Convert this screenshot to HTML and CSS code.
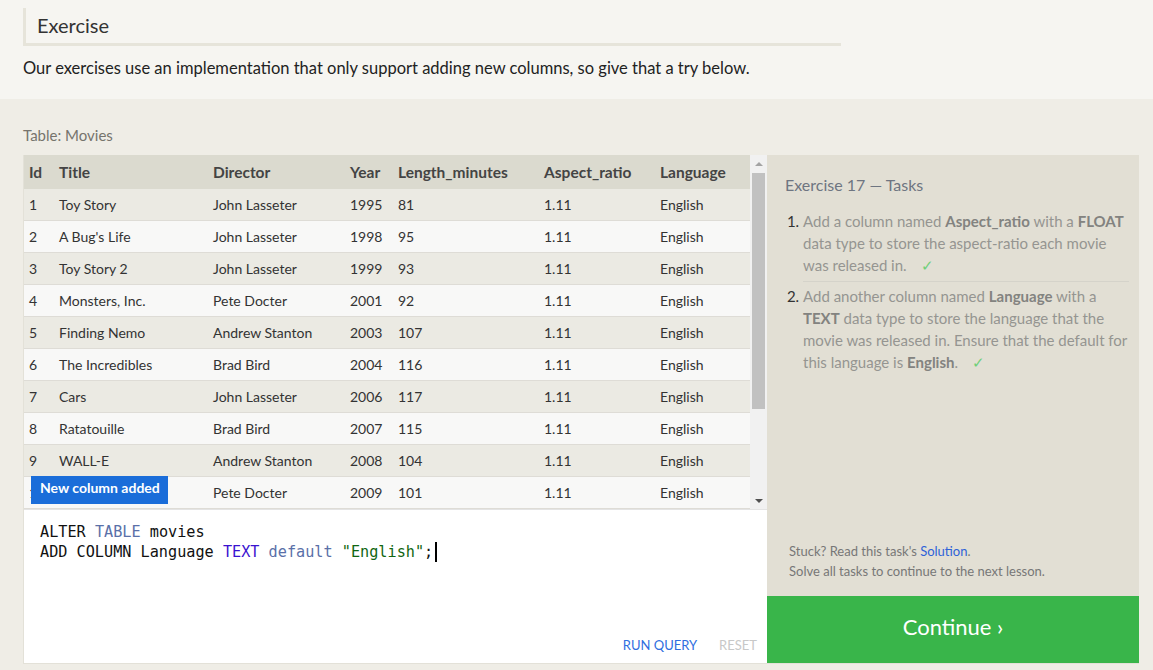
FILE: index.html
```html
<!DOCTYPE html>
<html>
<head>
<meta charset="utf-8">
<link rel="stylesheet" href="styles.css">
</head>
<body>
<div class="top">
  <div class="heading">Exercise</div>
  <p class="desc">Our exercises use an implementation that only support adding new columns, so give that a try below.</p>
</div>
<div class="main">
  <div class="caption">Table: Movies</div>
  <div class="widget">
    <div class="left">
      <div class="table-wrap">
        <table class="movies">
          <colgroup>
            <col style="width:27px"><col style="width:154px"><col style="width:137px"><col style="width:48px"><col style="width:146px"><col style="width:116px"><col style="width:98px">
          </colgroup>
          <thead>
            <tr><th>Id</th><th>Title</th><th>Director</th><th>Year</th><th>Length_minutes</th><th>Aspect_ratio</th><th>Language</th></tr>
          </thead>
          <tbody>
            <tr><td>1</td><td>Toy Story</td><td>John Lasseter</td><td>1995</td><td>81</td><td>1.11</td><td>English</td></tr>
            <tr><td>2</td><td>A Bug's Life</td><td>John Lasseter</td><td>1998</td><td>95</td><td>1.11</td><td>English</td></tr>
            <tr><td>3</td><td>Toy Story 2</td><td>John Lasseter</td><td>1999</td><td>93</td><td>1.11</td><td>English</td></tr>
            <tr><td>4</td><td>Monsters, Inc.</td><td>Pete Docter</td><td>2001</td><td>92</td><td>1.11</td><td>English</td></tr>
            <tr><td>5</td><td>Finding Nemo</td><td>Andrew Stanton</td><td>2003</td><td>107</td><td>1.11</td><td>English</td></tr>
            <tr><td>6</td><td>The Incredibles</td><td>Brad Bird</td><td>2004</td><td>116</td><td>1.11</td><td>English</td></tr>
            <tr><td>7</td><td>Cars</td><td>John Lasseter</td><td>2006</td><td>117</td><td>1.11</td><td>English</td></tr>
            <tr><td>8</td><td>Ratatouille</td><td>Brad Bird</td><td>2007</td><td>115</td><td>1.11</td><td>English</td></tr>
            <tr><td>9</td><td>WALL-E</td><td>Andrew Stanton</td><td>2008</td><td>104</td><td>1.11</td><td>English</td></tr>
            <tr><td>10</td><td>Up</td><td>Pete Docter</td><td>2009</td><td>101</td><td>1.11</td><td>English</td></tr>
          </tbody>
        </table>
        <div class="scrollbar">
          <div class="sb-btn"><span class="arrow-up"></span></div>
          <div class="sb-thumb"></div>
          <div class="sb-space"></div>
          <div class="sb-btn sb-btn-down"><span class="arrow-down"></span></div>
        </div>
        <div class="tooltip">New column added</div>
      </div>
      <div class="editor">
        <div class="code">
          <div class="line">ALTER <span class="kw">TABLE</span> movies</div>
          <div class="line">ADD COLUMN Language <span class="type">TEXT</span> <span class="kw">default</span> <span class="str">"English"</span>;<span class="cursor"></span></div>
        </div>
        <div class="actions">
          <span class="run">RUN QUERY</span>
          <span class="reset">RESET</span>
        </div>
      </div>
    </div>
    <div class="right">
      <div class="tasks">
        <div class="tasks-title">Exercise 17 — Tasks</div>
        <ol class="task-list">
          <li>Add a column named <b>Aspect_ratio</b> with a <b>FLOAT</b> data type to store the aspect-ratio each movie was released in.<span class="check">✓</span></li>
          <li>Add another column named <b>Language</b> with a <b>TEXT</b> data type to store the language that the movie was released in. Ensure that the default for this language is <b>English</b>.<span class="check">✓</span></li>
        </ol>
        <div class="stuck">
          <div>Stuck? Read this task's <span class="link">Solution</span>.</div>
          <div>Solve all tasks to continue to the next lesson.</div>
        </div>
      </div>
      <div class="continue">Continue ›</div>
    </div>
  </div>
</div>
</body>
</html>
```

FILE: styles.css
```css
html, body {
  margin: 0;
  padding: 0;
}
body {
  background: #efede6;
  font-family: "Lato", "Open Sans", sans-serif;
  color: #333;
}
.top {
  background: #f6f5f1;
  height: 99px;
  padding: 8px 0 0 23px;
  box-sizing: border-box;
}
.heading {
  border-left: 3px solid #e6e4da;
  border-bottom: 3px solid #e6e4da;
  font-size: 20px;
  line-height: 35px;
  padding-left: 11px;
  box-sizing: border-box;
  width: 818px;
  color: #333;
}
.desc {
  margin: 12px 0 0 0;
  font-size: 16.5px;
  color: #222;
  line-height: 20px;
}
.main {
  padding: 0 14px 0 23px;
}
.caption {
  font-size: 15px;
  color: #76746d;
  padding-top: 28px;
  height: 28px;
  line-height: 16px;
}
.widget {
  display: flex;
  width: 1116px;
  border-left: 1px solid #e3e1d8;
  border-bottom: 1px solid #e3e1d8;
  box-sizing: border-box;
  height: 509px;
}
.left {
  width: 743px;
  display: flex;
  flex-direction: column;
}
.table-wrap {
  position: relative;
  display: flex;
  height: 354px;
  overflow: hidden;
}
.movies {
  width: 726px;
  table-layout: fixed;
  border-collapse: collapse;
  font-size: 14px;
  color: #333;
}
.movies th {
  background: #dbdacf;
  height: 34px;
  text-align: left;
  font-weight: 700;
  font-size: 15.5px;
  padding: 0 8px;
  color: #444;
  white-space: nowrap;
}
.movies td {
  height: 31px;
  padding: 0 8px;
  border-bottom: 1px solid #dedcd6;
  white-space: nowrap;
}
.movies th:first-child, .movies td:first-child {
  padding-left: 5px;
  padding-right: 0;
}
.movies tbody tr:nth-child(odd) td {
  background: #ebeae3;
}
.movies tbody tr:nth-child(even) td {
  background: #f8f8f7;
}
.scrollbar {
  width: 17px;
  background: #f1f1f1;
  display: flex;
  flex-direction: column;
  align-items: center;
}
.sb-btn {
  height: 17px;
  width: 17px;
  display: flex;
  align-items: center;
  justify-content: center;
}
.arrow-up {
  width: 0;
  height: 0;
  border-left: 4px solid transparent;
  border-right: 4px solid transparent;
  border-bottom: 4px solid #a3a3a3;
}
.arrow-down {
  width: 0;
  height: 0;
  border-left: 4px solid transparent;
  border-right: 4px solid transparent;
  border-top: 4px solid #505050;
}
.sb-thumb {
  width: 13px;
  height: 236px;
  margin-top: 1px;
  background: #c1c1c1;
}
.sb-space {
  flex: 1;
}
.tooltip {
  position: absolute;
  left: 7px;
  top: 321px;
  width: 137px;
  height: 28px;
  background: #1a6dd9;
  color: #fff;
  font-weight: 700;
  font-size: 14px;
  line-height: 24px;
  padding-left: 9px;
  box-sizing: border-box;
}
.editor {
  flex: 1;
  background: #fff;
  border-top: 1px solid #e4e4e4;
  display: flex;
  flex-direction: column;
  justify-content: space-between;
}
.code {
  font-family: "DejaVu Sans Mono", "Liberation Mono", monospace;
  font-size: 15.2px;
  line-height: 20px;
  padding: 12px 0 0 16px;
  color: #111;
}
.line {
  white-space: pre;
}
.kw {
  color: #5a70a8;
}
.type {
  color: #3a12d0;
}
.str {
  color: #116611;
}
.cursor {
  display: inline-block;
  width: 2px;
  height: 20px;
  background: #000;
  margin-left: 2px;
  vertical-align: top;
}
.actions {
  display: flex;
  justify-content: flex-end;
  gap: 22px;
  padding: 0 10px 10px 0;
  font-size: 13px;
  line-height: 16px;
}
.run {
  color: #2f6ee0;
}
.reset {
  color: #c8c8c8;
}
.right {
  width: 372px;
  display: flex;
  flex-direction: column;
}
.tasks {
  flex: 1;
  background: #e2dfd4;
  padding: 20px 10px 0 18px;
  display: flex;
  flex-direction: column;
}
.tasks-title {
  font-size: 16px;
  color: #6e7581;
  line-height: 20px;
}
.task-list {
  margin: 15px 0 0 0;
  padding: 0 0 0 18px;
  font-size: 15px;
  line-height: 22px;
  color: #959591;
}
.task-list li {
  padding-bottom: 5px;
}
.task-list li + li {
  border-top: 1px solid #d5d3ca;
  padding-top: 3px;
}
.task-list li::marker {
  color: #333;
}
.task-list b {
  color: #838380;
}
.check {
  color: #6fcf7a;
  margin-left: 14px;
}
.stuck {
  margin-top: auto;
  padding: 0 0 15px 4px;
  font-size: 13px;
  line-height: 20px;
  color: #777;
}
.link {
  color: #2e62d8;
}
.continue {
  height: 67px;
  background: #39b54a;
  color: #fff;
  font-size: 22px;
  display: flex;
  align-items: center;
  justify-content: center;
  padding-bottom: 7px;
  box-sizing: border-box;
}
```
